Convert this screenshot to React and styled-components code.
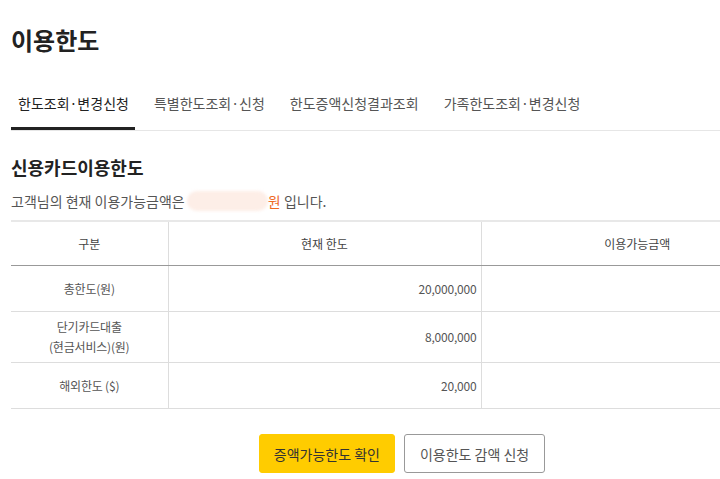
import styled, { createGlobalStyle } from 'styled-components';

const GlobalStyle = createGlobalStyle`
  html, body {
    margin: 0;
    padding: 0;
    background: #fff;
    overflow: hidden;
  }

  body {
    font-family: "Noto Sans CJK KR", "Noto Sans", sans-serif;
    color: #222;
  }
`;

const tabs = ['한도조회·변경신청', '특별한도조회·신청', '한도증액신청결과조회', '가족한도조회·변경신청'];

const rows = [
  { label: ['총한도(원)'], limit: '20,000,000' },
  { label: ['단기카드대출', '(현금서비스)(원)'], limit: '8,000,000' },
  { label: ['해외한도 ($)'], limit: '20,000' },
];

const App = () => {
  return (
    <SPage>
      <GlobalStyle />
      <STitle>이용한도</STitle>

      <STabBar>
        {tabs.map((tab, i) => (
          <STab key={tab} $active={i === 0}>
            {tab}
          </STab>
        ))}
      </STabBar>

      <SSectionTitle>신용카드이용한도</SSectionTitle>
      <SDesc>
        고객님의 현재 이용가능금액은 <SHidden />
        <SWon>원</SWon> 입니다.
      </SDesc>

      <STable>
        <colgroup>
          <col style={{ width: 157 }} />
          <col style={{ width: 313 }} />
          <col style={{ width: 312 }} />
        </colgroup>
        <thead>
          <tr>
            <STh>구분</STh>
            <STh>현재 한도</STh>
            <STh>이용가능금액</STh>
          </tr>
        </thead>
        <tbody>
          {rows.map((row) => (
            <tr key={row.limit}>
              <STd>
                {row.label.map((line) => (
                  <div key={line}>{line}</div>
                ))}
              </STd>
              <STd $right>{row.limit}</STd>
              <STd $right />
            </tr>
          ))}
        </tbody>
      </STable>

      <SButtonRow>
        <SButton $primary>증액가능한도 확인</SButton>
        <SButton>이용한도 감액 신청</SButton>
      </SButtonRow>
    </SPage>
  );
};

const SPage = styled.div`
  width: 782px;
  padding: 0 0 0 11px;
`;

const STitle = styled.h1`
  margin: 0;
  padding-top: 24px;

  font-size: 24px;
  font-weight: 700;
  line-height: 32px;
  color: #222;
`;

const STabBar = styled.div`
  display: flex;
  gap: 12px;

  margin-top: 21px;
  border-bottom: 1px solid #e6e6e6;
`;

const STab = styled.div`
  padding: 16px 6px 14px 7px;

  font-size: 14px;
  line-height: 20px;
  color: ${({ $active }) => ($active ? '#222' : '#555')};

  border-bottom: 3px solid ${({ $active }) => ($active ? '#222' : 'transparent')};
  cursor: pointer;
`;

const SSectionTitle = styled.h2`
  margin: 24px 0 0;

  font-size: 18px;
  font-weight: 700;
  line-height: 24px;
  color: #222;
`;

const SDesc = styled.p`
  display: flex;
  align-items: center;

  margin: 12px 0 0;

  font-size: 14px;
  line-height: 20px;
  color: #555;
  white-space: pre;
`;

const SHidden = styled.span`
  display: inline-block;
  width: 81px;
  height: 20px;
  margin-left: -1px;

  background: #fdeee7;
  border-radius: 10px;
  filter: blur(1.5px);
`;

const SWon = styled.span`
  color: #ee6a1f;
`;

const STable = styled.table`
  width: 782px;
  margin-top: 9px;

  border-collapse: collapse;
  table-layout: fixed;
  border-top: 2px solid #e8e8e8;

  font-size: 12px;
  color: #444;
`;

const STh = styled.th`
  height: 43px;
  padding: 0 4px;

  font-weight: 400;
  text-align: center;

  border-bottom: 1px solid #999;
  border-left: 1px solid #ddd;

  &:first-child {
    border-left: none;
  }
`;

const STd = styled.td`
  height: 35px;
  padding: 5px 4px;

  line-height: 20px;
  text-align: ${({ $right }) => ($right ? 'right' : 'center')};
  color: #555;
  letter-spacing: -0.2px;

  border-bottom: 1px solid #ddd;
  border-left: 1px solid #ddd;

  &:first-child {
    border-left: none;
  }
`;

const SButtonRow = styled.div`
  display: flex;
  justify-content: center;
  gap: 9px;

  margin-top: 25px;
`;

const SButton = styled.button`
  height: 39px;
  padding: 0 ${({ $primary }) => ($primary ? '14px' : '15px')};

  font-family: "Noto Sans CJK KR", "Noto Sans", sans-serif;
  font-size: 14px;
  color: ${({ $primary }) => ($primary ? '#333' : '#555')};

  background: ${({ $primary }) => ($primary ? '#ffcc00' : '#fff')};
  border: 1px solid ${({ $primary }) => ($primary ? '#ffcc00' : '#999')};
  border-radius: 3px;
  cursor: pointer;
`;

export default App;
